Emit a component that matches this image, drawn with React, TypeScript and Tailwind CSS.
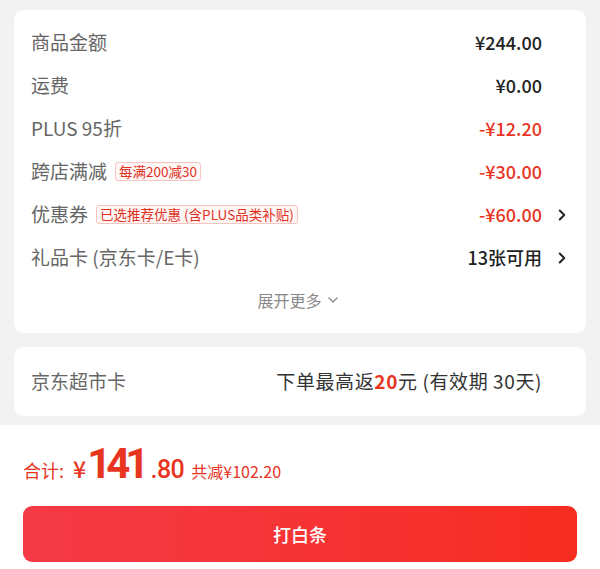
import { ChevronDown, ChevronRight } from 'lucide-react'

const font = { fontFamily: '"Noto Sans CJK SC", "Noto Sans", sans-serif' }
const num = { fontFamily: 'Roboto, "Noto Sans", sans-serif' }

function Row({
  label,
  tag,
  value,
  red,
  arrow,
}: {
  label: string
  tag?: string
  value: React.ReactNode
  red?: boolean
  arrow?: boolean
}) {
  return (
    <div className="flex h-[43px] items-center">
      <span className="text-[19px] text-[#666666]">{label}</span>
      {tag && (
        <span className="ml-[8px] rounded-[3px] border border-[#f3c6c1] bg-[#fff7f6] px-[3px] text-[13.5px] leading-[17px] text-[#e0321f]">
          {tag}
        </span>
      )}
      <span
        className={`ml-auto text-[18px] font-medium ${red ? 'text-[#e8351f]' : 'text-[#222222]'}`}
      >
        {value}
      </span>
      <span className="flex w-[29px] justify-end">
        {arrow && <ChevronRight size={18} strokeWidth={2.6} className="text-[#222222]" />}
      </span>
    </div>
  )
}

export default function App() {
  return (
    <div className="flex h-[569px] w-[600px] flex-col bg-[#f2f2f2]" style={font}>
      <div className="mx-[14px] mt-[10px] rounded-[10px] bg-white pl-[17px] pr-[15px] pt-[11px]">
        <Row label="商品金额" value="¥244.00" />
        <Row label="运费" value="¥0.00" />
        <Row label="PLUS 95折" value="-¥12.20" red />
        <Row label="跨店满减" tag="每满200减30" value="-¥30.00" red />
        <Row label="优惠券" tag="已选推荐优惠 (含PLUS品类补贴)" value="-¥60.00" red arrow />
        <Row label="礼品卡 (京东卡/E卡)" value="13张可用" arrow />
        <div className="flex h-[43px] items-center justify-center pr-[4px] pb-[2px] text-[16px] text-[#888888]">
          展开更多
          <ChevronDown size={16} strokeWidth={2} className="ml-[3px]" />
        </div>
        <div className="h-[11px]" />
      </div>

      <div className="mx-[14px] mt-[14px] flex h-[69px] items-center rounded-[10px] bg-white pl-[17px] pr-[44px]">
        <span className="text-[19px] text-[#666666]">京东超市卡</span>
        <span className="ml-auto text-[19px] tracking-[0.6px] text-[#333333]">
          下单最高返<span className="font-bold text-[#e8351f]">20</span>元 (有效期 30天)
        </span>
      </div>

      <div className="mt-auto flex h-[144px] flex-col bg-white px-[23px]">
        <div className="mt-[17px] flex h-[44px] items-baseline text-[#e8351f]">
          <span className="text-[18px]">合计:</span>
          <span className="ml-[9px] text-[23px] font-medium">¥</span>
          <span className="ml-[1px] text-[42px] font-bold leading-[44px] tracking-[-5px]" style={num}>
            141
          </span>
          <span className="ml-[6px] text-[25px] font-medium tracking-[-0.5px]" style={num}>
            .80
          </span>
          <span className="ml-[7px] text-[16px]">共减¥102.20</span>
        </div>
        <button className="mt-[20px] flex h-[56px] items-center justify-center rounded-[9px] bg-gradient-to-r from-[#f43a46] to-[#f72c1f] text-[18px] font-medium text-white">
          打白条
        </button>
      </div>
    </div>
  )
}
